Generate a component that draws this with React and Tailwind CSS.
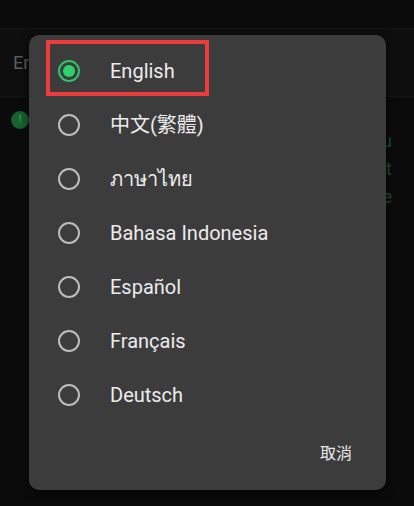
import React from 'react';

const languages = [
  'English',
  '中文(繁體)',
  'ภาษาไทย',
  'Bahasa Indonesia',
  'Español',
  'Français',
  'Deutsch',
];

const Radio = ({ checked }) => (
  <span
    className={`flex h-[22px] w-[22px] shrink-0 items-center justify-center rounded-full border-[2.5px] ${
      checked ? 'border-[#2fc26a]' : 'border-[#bdbdbd]'
    }`}
  >
    {checked && <span className="h-[12px] w-[12px] rounded-full bg-[#2fd36e]" />}
  </span>
);

const App = () => {
  return (
    <div
      className="relative h-[506px] w-[414px] overflow-hidden bg-[#0b0b0b]"
      style={{ fontFamily: 'Roboto, "Noto Sans", "Noto Sans CJK TC", sans-serif' }}
    >
      {/* dimmed page behind */}
      <div className="h-[28px]" />
      <div className="flex h-[69px] items-center border-y border-[#151515] bg-[#0e0e0e] px-[13px]">
        <span className="text-[18px] text-[#5c5c5c]">English</span>
      </div>
      <div className="flex items-start justify-between pl-[11px] pr-[22px] pt-[14px]">
        <span className="flex h-[18px] w-[18px] items-center justify-center rounded-full bg-[#17602f] text-[11px] font-bold text-[#3f8a57]">
          !
        </span>
        <div className="mt-[16px] flex flex-col items-end text-[18px] leading-[28px] text-[#1c4d2c]">
          <span>u</span>
          <span>t</span>
          <span>e</span>
        </div>
      </div>

      {/* language dialog */}
      <div className="absolute left-[29px] top-[35px] flex h-[455px] w-[357px] flex-col rounded-[10px] bg-[#3c3c3c] shadow-[0_2px_8px_rgba(0,0,0,0.6)]">
        <ul className="pt-[9px]">
          {languages.map((lang, i) => (
            <li key={lang} className="relative flex h-[54px] items-center gap-[30px] pl-[29px]">
              {i === 0 && (
                <span className="pointer-events-none absolute -top-[4px] left-[17px] h-[56px] w-[163px] border-[4px] border-[#ee3b3b]" />
              )}
              <Radio checked={i === 0} />
              <span className="text-[20px] text-[#ececec]">{lang}</span>
            </li>
          ))}
        </ul>
        <div className="mt-auto flex justify-end px-[34px] pb-[24px]">
          <span className="text-[16px] text-[#e8e8e8]">取消</span>
        </div>
      </div>
    </div>
  );
};

export default App;
